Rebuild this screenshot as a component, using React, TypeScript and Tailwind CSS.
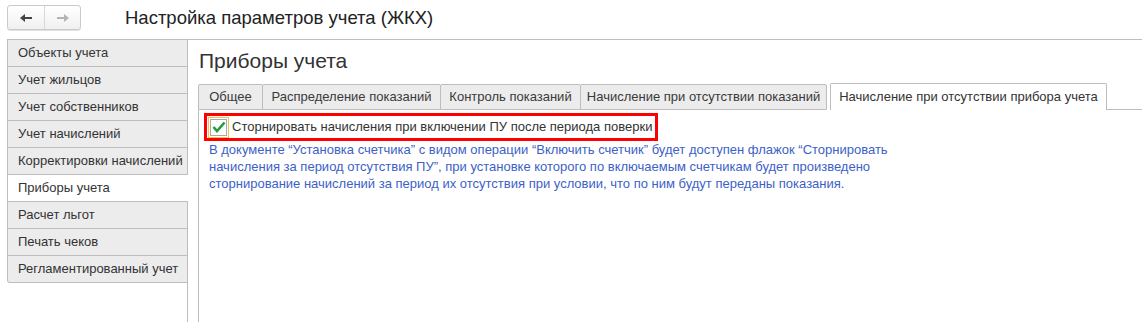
import React from "react";

const sections = [
  "Объекты учета",
  "Учет жильцов",
  "Учет собственников",
  "Учет начислений",
  "Корректировки начислений",
  "Приборы учета",
  "Расчет льгот",
  "Печать чеков",
  "Регламентированный учет",
];

const tabs = [
  { title: "Общее", w: "w-[65px]" },
  { title: "Распределение показаний", w: "w-[179px]" },
  { title: "Контроль показаний", w: "w-[141px]" },
  { title: "Начисление при отсутствии показаний", w: "w-[247px]" },
];

function Arrow({ dir, color }: { dir: "left" | "right"; color: string }) {
  return (
    <svg width="14" height="10" viewBox="0 0 14 10">
      {dir === "left" ? (
        <>
          <path d="M1 5 L6 1 L6 9 Z" fill={color} />
          <rect x="5" y="4" width="8" height="2" fill={color} />
        </>
      ) : (
        <>
          <path d="M13 5 L8 1 L8 9 Z" fill={color} />
          <rect x="1" y="4" width="8" height="2" fill={color} />
        </>
      )}
    </svg>
  );
}

function Checkbox() {
  return (
    <div className="w-[21px] h-[21px] border border-[#f0c24a] flex items-center justify-center">
      <div className="w-[17px] h-[17px] border border-[#a9a9a9] bg-white flex items-center justify-center">
        <svg width="14" height="12" viewBox="0 0 14 12">
          <path d="M1.5 6 L5 10 L12.5 1.5" fill="none" stroke="#1f9e3a" strokeWidth="2.6" />
        </svg>
      </div>
    </div>
  );
}

export default function App() {
  return (
    <div className="w-[1142px] h-[322px] bg-white overflow-hidden text-[13px] text-[#333] font-['Liberation_Sans',Arial,sans-serif]">
      {/* header */}
      <div className="h-[39px] pl-[7px] flex items-start">
        <div className="mt-[5px] w-[74px] h-[25px] rounded-[3px] border border-[#cfc8c8] bg-gradient-to-b from-white to-[#f0f0f0] flex shadow-[0_1px_0_#e0e0e0]">
          <div className="w-[37px] flex items-center justify-center border-r border-[#d8d8d8]">
            <Arrow dir="left" color="#444" />
          </div>
          <div className="flex-1 flex items-center justify-center">
            <Arrow dir="right" color="#b4b4b4" />
          </div>
        </div>
        <div className="ml-[44px] mt-[7px] text-[18.5px] leading-[22px] text-[#222]">
          Настройка параметров учета (ЖКХ)
        </div>
      </div>

      <div className="ml-[7px] border-t border-[#bdbdbd] flex h-[283px]">
        {/* sections */}
        <div className="w-[181px] flex flex-col">
          {sections.map((s, i) => {
            const active = s === "Приборы учета";
            const last = i === sections.length - 1;
            return (
              <div
                key={s}
                className={
                  active
                    ? "h-[27px] pl-[10px] flex items-center bg-white border-l border-b border-[#bdbdbd]"
                    : last
                    ? "h-[27px] pl-[10px] flex items-center bg-[#ececec] border-l border-b border-r border-[#bdbdbd] rounded-bl-[3px]"
                    : "h-[27px] pl-[10px] flex items-center bg-[#ececec] border-l border-b border-r border-[#bdbdbd]"
                }
              >
                {s}
              </div>
            );
          })}
          <div className="flex-1 border-r border-[#bdbdbd]" />
        </div>

        {/* content */}
        <div className="flex-1 flex flex-col">
          <div className="pl-[11px] pt-[9px] h-[43px] text-[21px] leading-[24px] text-[#333]">
            Приборы учета
          </div>
          <div className="pl-[10px] flex items-end h-[27px]">
            {tabs.map((t) => (
              <div
                key={t.title}
                className={`${t.w} h-[26px] flex items-center justify-center bg-[#ececec] border border-[#bdbdbd] -mr-px rounded-t-[2px] text-[#3a3a3a]`}
              >
                {t.title}
              </div>
            ))}
            <div className="ml-[4px] w-[277px] h-[27px] flex items-center justify-center bg-white border-t border-l border-r border-[#bdbdbd] rounded-t-[2px]">
              Начисление при отсутствии прибора учета
            </div>
            <div className="flex-1 border-b border-[#bdbdbd]" />
          </div>
          <div className="ml-[10px] flex-1 border-l border-[#bdbdbd] pt-[3px]">
            <div className="ml-[5px] w-[454px] h-[28px] border-[3px] border-[#ff0000] flex items-center pl-[1px]">
              <Checkbox />
              <span className="ml-[3px]">
                Сторнировать начисления при включении ПУ после периода поверки
              </span>
            </div>
            <div className="ml-[10px] leading-[17px] text-[#3d5fc8]">
              В документе “Установка счетчика” с видом операции “Включить счетчик” будет доступен флажок “Сторнировать
              <br />
              начисления за период отсутствия ПУ”, при установке которого по включаемым счетчикам будет произведено
              <br />
              сторнирование начислений за период их отсутствия при условии, что по ним будут переданы показания.
            </div>
          </div>
        </div>
      </div>
    </div>
  );
}
